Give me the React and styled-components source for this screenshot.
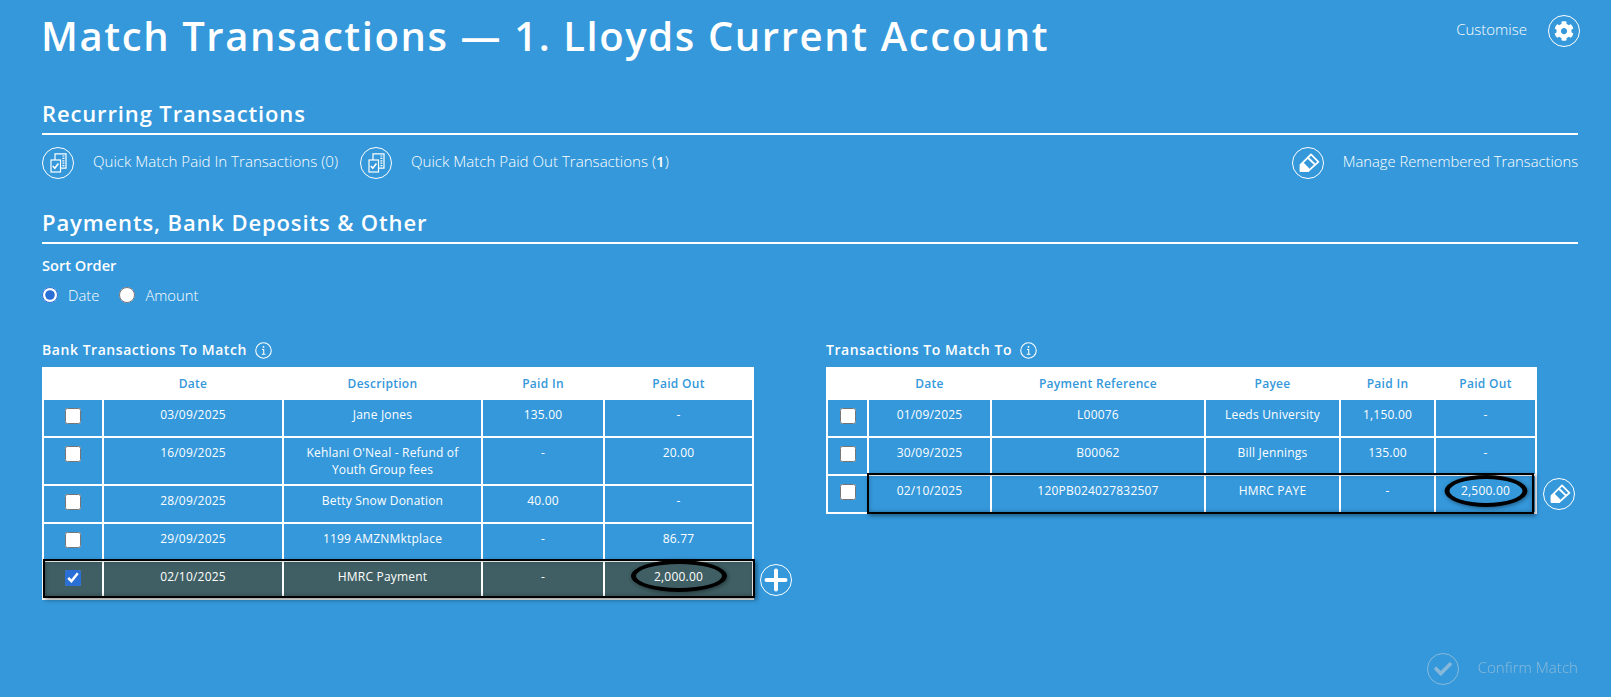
import React from "react";
import styled, { createGlobalStyle } from "styled-components";
import { FaCog, FaCheck } from "react-icons/fa";

const GlobalStyle = createGlobalStyle`
  html, body {
    margin: 0;
    padding: 0;
    background-color: #3498db;
  }
  body {
    font-family: "Open Sans", "Liberation Sans", sans-serif;
    color: #fff;
  }
`;

const Page = styled.div`
  min-height: 697px;
  box-sizing: border-box;
  padding: 0 33px 0 42px;
  overflow: hidden;
`;

const Header = styled.header`
  display: flex;
  justify-content: space-between;
  align-items: flex-start;
  height: 105px;
`;

const Title = styled.h1`
  margin: 10px 0 0 -1px;
  font-size: 40px;
  line-height: 52px;
  font-weight: 600;
  letter-spacing: 1.6px;
`;

const HeaderAction = styled.div`
  display: flex;
  align-items: center;
  gap: 21px;
  margin: 15px -2px 0 0;
  font-size: 15px;
  font-weight: 300;
  span:first-child {
    padding-bottom: 4px;
  }
`;

const SectionTitle = styled.h2`
  margin: 0;
  height: 28px;
  line-height: 16px;
  font-size: 22px;
  font-weight: 600;
  letter-spacing: 0.87px;
  border-bottom: 2px solid #fff;
`;

const ActionRow = styled.div`
  display: flex;
  align-items: center;
  gap: 22px;
  margin: 12px 0 35px;
  height: 32px;
`;

const ActionLink = styled.div`
  display: flex;
  align-items: center;
  gap: 19px;
  font-size: ${(p) => (p.$right ? 14.75 : 15.1)}px;
  font-weight: 300;
  margin-left: ${(p) => (p.$right ? "auto" : "0")};
  opacity: ${(p) => (p.$disabled ? 0.5 : 1)};
  filter: ${(p) => (p.$disabled ? "brightness(0.85)" : "none")};
  span:last-child {
    padding-bottom: 4px;
  }
  b {
    font-weight: 600;
  }
`;

const IconCircle = styled.span`
  display: flex;
  align-items: center;
  justify-content: center;
  flex: none;
  width: 32px;
  height: 32px;
  box-sizing: border-box;
  border: 1.5px solid #fff;
  border-radius: 50%;
`;

const SortLabel = styled.div`
  margin-top: 12px;
  font-size: 14.6px;
  line-height: 18px;
  font-weight: 600;
`;

const SortOptions = styled.div`
  display: flex;
  align-items: center;
  height: 16px;
  margin-top: 13px;
  font-size: 14.8px;
  font-weight: 300;
`;

const RadioLabel = styled.label`
  display: flex;
  align-items: center;
  gap: 10px;
  margin-right: 20px;
`;

const Radio = styled.input`
  width: 16px;
  height: 16px;
  margin: 0;
  accent-color: #2a6fd6;
`;

const Panels = styled.div`
  display: flex;
  gap: 34px;
  margin-top: 37px;
`;

const Panel = styled.section`
  display: flex;
  flex-direction: column;
`;

const PanelTitle = styled.h3`
  display: flex;
  align-items: center;
  gap: 8px;
  margin: 0 0 7px;
  font-size: 14px;
  line-height: 20px;
  font-weight: 600;
  letter-spacing: 0.55px;
`;

const TableRow = styled.div`
  display: flex;
  align-items: flex-end;
  gap: 6px;
`;

const TableWrap = styled.div`
  position: relative;
`;

const Table = styled.table`
  table-layout: fixed;
  width: ${(p) => p.$width}px;
  border-collapse: separate;
  border-spacing: 0;
  font-size: 12px;
  line-height: 17px;
`;

const Th = styled.th`
  height: 33px;
  padding: 0 2px 0 0;
  background-color: #fff;
  color: #3498db;
  font-weight: 600;
  letter-spacing: 0.3px;
  text-align: center;
  vertical-align: middle;
`;

const Td = styled.td`
  position: relative;
  box-sizing: border-box;
  height: ${(p) => (p.$tall ? 48 : 38)}px;
  padding: 6px 8px 0;
  text-align: center;
  vertical-align: top;
  font-weight: 400;
  letter-spacing: 0.2px;
  background-color: ${(p) => (p.$selected ? "#3f5f64" : "transparent")};
  border-right: 2px solid #fff;
  border-bottom: 2px solid #fff;
  &:first-child {
    border-left: 2px solid #fff;
    padding: 8px 0 0;
  }
`;

const Check = styled.input`
  display: block;
  width: 16px;
  height: 16px;
  margin: 0 auto;
  accent-color: #2a6fd6;
`;

const RowHighlight = styled.div`
  position: absolute;
  left: ${(p) => p.$left}px;
  top: ${(p) => p.$top}px;
  width: ${(p) => p.$width}px;
  height: ${(p) => p.$height}px;
  box-sizing: border-box;
  border: 2px solid #000;
  box-shadow: 2px 2px 4px rgba(0, 0, 0, 0.4), inset 0 0 4px rgba(0, 0, 0, 0.3);
  pointer-events: none;
`;

const AmountRing = styled.span`
  position: absolute;
  top: ${(p) => p.$top}px;
  left: 50%;
  width: ${(p) => p.$width}px;
  height: 32px;
  box-sizing: border-box;
  transform: translateX(-50%);
  border: 4px solid #000;
  border-left-width: 5px;
  border-right-width: 5px;
  border-radius: 50%;
  box-shadow: 1px 1px 4px rgba(0, 0, 0, 0.45);
  pointer-events: none;
`;

const SideButton = styled(IconCircle)`
  margin-bottom: 4px;
`;

const Footer = styled.div`
  display: flex;
  justify-content: flex-end;
  margin-top: 53px;
`;

const InfoIcon = () => (
  <svg width="17" height="17" viewBox="0 0 16 16" fill="none" stroke="#fff">
    <circle cx="8" cy="8" r="7.3" strokeWidth="1" />
    <path d="M6.6 7h1.6v4.6M6.4 11.6h3.4" strokeWidth="1" />
    <circle cx="8" cy="4.6" r="0.9" fill="#fff" stroke="none" />
  </svg>
);

const DocsIcon = () => (
  <svg width="20" height="20" viewBox="0 0 20 20" fill="none" stroke="#fff" strokeWidth="1.2">
    <path d="M7 7V.8h11v14.4h-5.5" />
    <rect x="3" y="7" width="9.5" height="12" />
    <path d="M14.4 3h2M14.4 5.4h2M14.4 7.8h2M14.4 10.2h2M14.4 12.6h2" />
    <path d="M4.8 13l2 2.2 3.6-4.6" strokeWidth="1.6" />
  </svg>
);

const PencilIcon = () => (
  <svg width="32" height="32" viewBox="0 0 32 32" style={{ margin: "-1.5px" }}>
    <path
      fill="none"
      stroke="#fff"
      strokeWidth="1.8"
      strokeLinejoin="round"
      d="M8.5 24V17.8L19 7.4 26.4 14.8 16.2 24Z"
    />
    <path fill="#fff" d="M8 24.6V17.4L11 15 17.4 21.4 15.8 24.6Z" />
    <path fill="#fff" d="M15 11.2 16.4 9.8 24 17.2 22.6 18.6Z" />
  </svg>
);

const PlusIcon = () => (
  <svg width="24" height="24" viewBox="0 0 24 24" stroke="#fff" strokeWidth="4" strokeLinecap="round">
    <path d="M2.5 12h19M12 2.5v19" />
  </svg>
);

const bankRows = [
  { date: "03/09/2025", desc: "Jane Jones", paidIn: "135.00", paidOut: "-" },
  { date: "16/09/2025", desc: "Kehlani O'Neal - Refund of Youth Group fees", paidIn: "-", paidOut: "20.00", tall: true },
  { date: "28/09/2025", desc: "Betty Snow Donation", paidIn: "40.00", paidOut: "-" },
  { date: "29/09/2025", desc: "1199 AMZNMktplace", paidIn: "-", paidOut: "86.77" },
  { date: "02/10/2025", desc: "HMRC Payment", paidIn: "-", paidOut: "2,000.00", selected: true, ring: 96 },
];

const matchRows = [
  { date: "01/09/2025", ref: "L00076", payee: "Leeds University", paidIn: "1,150.00", paidOut: "-" },
  { date: "30/09/2025", ref: "B00062", payee: "Bill Jennings", paidIn: "135.00", paidOut: "-" },
  { date: "02/10/2025", ref: "120PB024027832507", payee: "HMRC PAYE", paidIn: "-", paidOut: "2,500.00", ring: 83 },
];

const App = () => {
  return (
    <Page>
      <GlobalStyle />
      <Header>
        <Title>Match Transactions — 1. Lloyds Current Account</Title>
        <HeaderAction>
          <span>Customise</span>
          <IconCircle>
            <FaCog size={20} color="#fff" />
          </IconCircle>
        </HeaderAction>
      </Header>

      <SectionTitle>Recurring Transactions</SectionTitle>
      <ActionRow>
        <ActionLink>
          <IconCircle><DocsIcon /></IconCircle>
          <span>Quick Match Paid In Transactions (0)</span>
        </ActionLink>
        <ActionLink>
          <IconCircle><DocsIcon /></IconCircle>
          <span>Quick Match Paid Out Transactions (<b>1</b>)</span>
        </ActionLink>
        <ActionLink $right>
          <IconCircle><PencilIcon /></IconCircle>
          <span>Manage Remembered Transactions</span>
        </ActionLink>
      </ActionRow>

      <SectionTitle>Payments, Bank Deposits &amp; Other</SectionTitle>
      <SortLabel>Sort Order</SortLabel>
      <SortOptions>
        <RadioLabel><Radio type="radio" name="sort" defaultChecked />Date</RadioLabel>
        <RadioLabel><Radio type="radio" name="sort" />Amount</RadioLabel>
      </SortOptions>

      <Panels>
        <Panel>
          <PanelTitle>Bank Transactions To Match <InfoIcon /></PanelTitle>
          <TableRow>
            <TableWrap>
              <Table $width={712}>
                <colgroup>
                  <col width="62" /><col width="180" /><col width="199" /><col width="122" /><col width="149" />
                </colgroup>
                <thead>
                  <tr><Th /><Th>Date</Th><Th>Description</Th><Th>Paid In</Th><Th>Paid Out</Th></tr>
                </thead>
                <tbody>
                  {bankRows.map((row) => (
                    <tr key={row.date}>
                      <Td $selected={row.selected} $tall={row.tall}>
                        <Check type="checkbox" defaultChecked={row.selected} />
                      </Td>
                      <Td $selected={row.selected} $tall={row.tall}>{row.date}</Td>
                      <Td $selected={row.selected} $tall={row.tall}>{row.desc}</Td>
                      <Td $selected={row.selected} $tall={row.tall}>{row.paidIn}</Td>
                      <Td $selected={row.selected} $tall={row.tall}>
                        {row.ring && <AmountRing $width={row.ring} $top={-2} />}
                        {row.paidOut}
                      </Td>
                    </tr>
                  ))}
                </tbody>
              </Table>
              <RowHighlight $left={1} $top={192} $width={712} $height={39} />
            </TableWrap>
            <SideButton><PlusIcon /></SideButton>
          </TableRow>
        </Panel>

        <Panel>
          <PanelTitle>Transactions To Match To <InfoIcon /></PanelTitle>
          <TableRow>
            <TableWrap>
              <Table $width={711}>
                <colgroup>
                  <col width="43" /><col width="123" /><col width="214" /><col width="135" /><col width="95" /><col width="101" />
                </colgroup>
                <thead>
                  <tr><Th /><Th>Date</Th><Th>Payment Reference</Th><Th>Payee</Th><Th>Paid In</Th><Th>Paid Out</Th></tr>
                </thead>
                <tbody>
                  {matchRows.map((row) => (
                    <tr key={row.date}>
                      <Td><Check type="checkbox" /></Td>
                      <Td>{row.date}</Td>
                      <Td>{row.ref}</Td>
                      <Td>{row.payee}</Td>
                      <Td>{row.paidIn}</Td>
                      <Td>
                        {row.ring && <AmountRing $width={row.ring} $top={-1} />}
                        {row.paidOut}
                      </Td>
                    </tr>
                  ))}
                </tbody>
              </Table>
              <RowHighlight $left={41} $top={106} $width={667} $height={41} />
            </TableWrap>
            <SideButton><PencilIcon /></SideButton>
          </TableRow>
        </Panel>
      </Panels>

      <Footer>
        <ActionLink $disabled>
          <IconCircle><FaCheck size={18} color="#fff" /></IconCircle>
          <span>Confirm Match</span>
        </ActionLink>
      </Footer>
    </Page>
  );
};

export default App;
